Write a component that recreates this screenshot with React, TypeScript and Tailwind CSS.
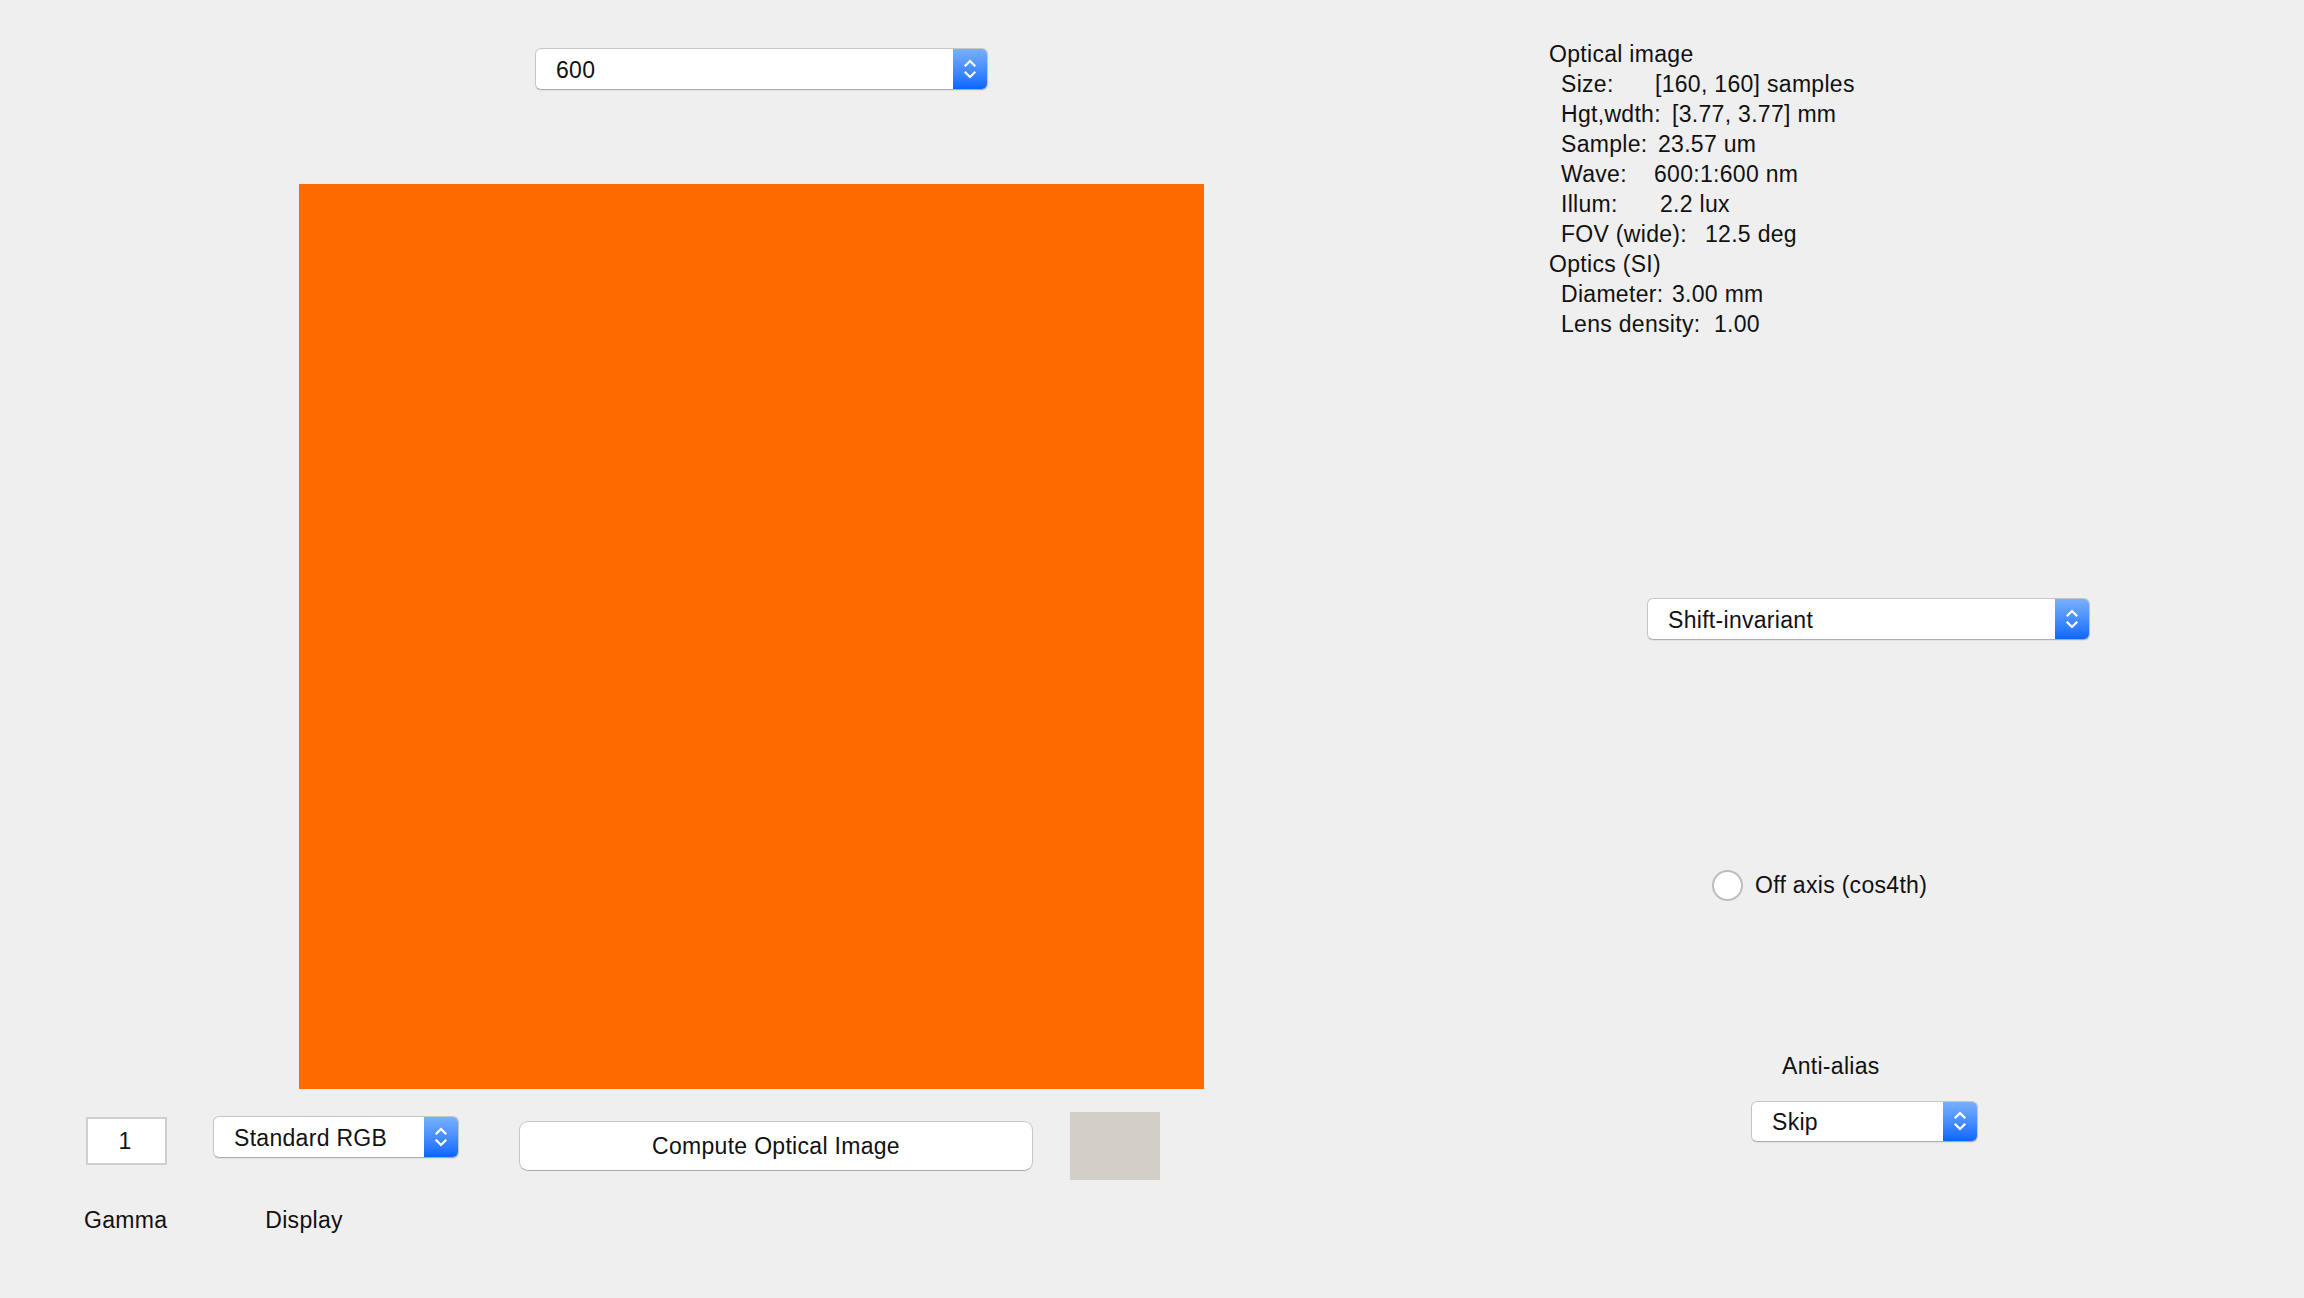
import type React from "react"

const font = { fontFamily: '"Liberation Sans", Arial, sans-serif' }

const Chevrons: React.FC = () => (
  <svg width="14" height="22" viewBox="0 0 14 22" fill="none" stroke="white" strokeWidth="2.2" strokeLinecap="square">
    <polyline points="2.5,7.5 7,3 11.5,7.5" />
    <polyline points="2.5,14.5 7,19 11.5,14.5" />
  </svg>
)

type PopupProps = { value: string; className: string }

const Popup: React.FC<PopupProps> = ({ value, className }) => (
  <div
    className={`flex items-stretch rounded-[6px] border border-[#c6c6c6] border-b-[#adadad] bg-white shadow-[0_1px_1px_rgba(0,0,0,0.06)] overflow-hidden ${className}`}
  >
    <div className="flex-1 flex items-center pl-[20px] pt-[3px] text-[23px] tracking-[0.3px] text-[#111]">{value}</div>
    <div className="w-[34px] flex items-center justify-center bg-gradient-to-b from-[#78b0fb] to-[#0866ff]">
      <Chevrons />
    </div>
  </div>
)

const info = [
  { label: "Size:", value: "[160, 160] samples", w: "w-[94px]" },
  { label: "Hgt,wdth:", value: "[3.77, 3.77] mm", w: "w-[111px]" },
  { label: "Sample:", value: "23.57 um", w: "w-[97px]" },
  { label: "Wave:", value: "600:1:600 nm", w: "w-[93px]" },
  { label: "Illum:", value: "2.2 lux", w: "w-[99px]" },
  { label: "FOV (wide):", value: "12.5 deg", w: "w-[144px]" },
]

const optics = [
  { label: "Diameter:", value: "3.00 mm", w: "w-[111px]" },
  { label: "Lens density:", value: "1.00", w: "w-[153px]" },
]

const InfoLine: React.FC<{ label: string; value: string; w: string }> = ({ label, value, w }) => (
  <div className="flex pl-[12px] whitespace-nowrap">
    <span className={w}>{label}</span>
    <span>{value}</span>
  </div>
)

export default function App() {
  return (
    <div style={font} className="w-[2304px] h-[1298px] bg-[#efefef] flex text-[#111] overflow-hidden">
      {/* left: wavelength, image, display controls */}
      <div className="w-[1549px] flex flex-col">
        <Popup value="600" className="mt-[48px] ml-[535px] w-[453px] h-[42px]" />

        <div className="mt-[94px] ml-[299px] w-[905px] h-[905px] bg-[#ff6a00]" />

        <div className="mt-[23px] flex items-start">
          <div className="mt-[5px] ml-[86px] w-[81px] h-[48px] bg-white border-2 border-[#cfcfcf] flex items-center justify-center pr-[3px] text-[23px]">
            1
          </div>
          <Popup value="Standard RGB" className="mt-[4px] ml-[46px] w-[246px] h-[42px]" />
          <button className="mt-[9px] ml-[60px] w-[514px] h-[50px] rounded-[9px] border border-[#c6c6c6] border-b-[#a9a9a9] bg-white text-[23px] tracking-[0.3px] text-[#111]">
            Compute Optical Image
          </button>
          <div className="ml-[37px] w-[90px] h-[68px] bg-[#d3cfc7]" />
        </div>

        <div className="mt-[25px] flex text-[23px] leading-[30px] tracking-[0.3px]">
          <span className="ml-[84px]">Gamma</span>
          <span className="ml-[98px]">Display</span>
        </div>
      </div>

      {/* right: optics summary and options */}
      <div className="flex-1 flex flex-col">
        <div className="mt-[39px] text-[23px] leading-[30px] tracking-[0.3px]">
          <div>Optical image</div>
          {info.map((l) => (
            <InfoLine key={l.label} {...l} />
          ))}
          <div>Optics (SI)</div>
          {optics.map((l) => (
            <InfoLine key={l.label} {...l} />
          ))}
        </div>

        <Popup value="Shift-invariant" className="mt-[259px] ml-[98px] w-[443px] h-[42px]" />

        <label className="mt-[228px] ml-[163px] flex items-center gap-[12px] text-[23px] tracking-[0.3px]">
          <span className="w-[31px] h-[31px] rounded-full border-2 border-[#bdbdbd] bg-white" />
          <span>Off axis (cos4th)</span>
        </label>

        <div className="mt-[148px] ml-[233px] text-[23px] leading-[30px] tracking-[0.3px]">Anti-alias</div>

        <Popup value="Skip" className="mt-[20px] ml-[202px] w-[227px] h-[41px]" />
      </div>
    </div>
  )
}
